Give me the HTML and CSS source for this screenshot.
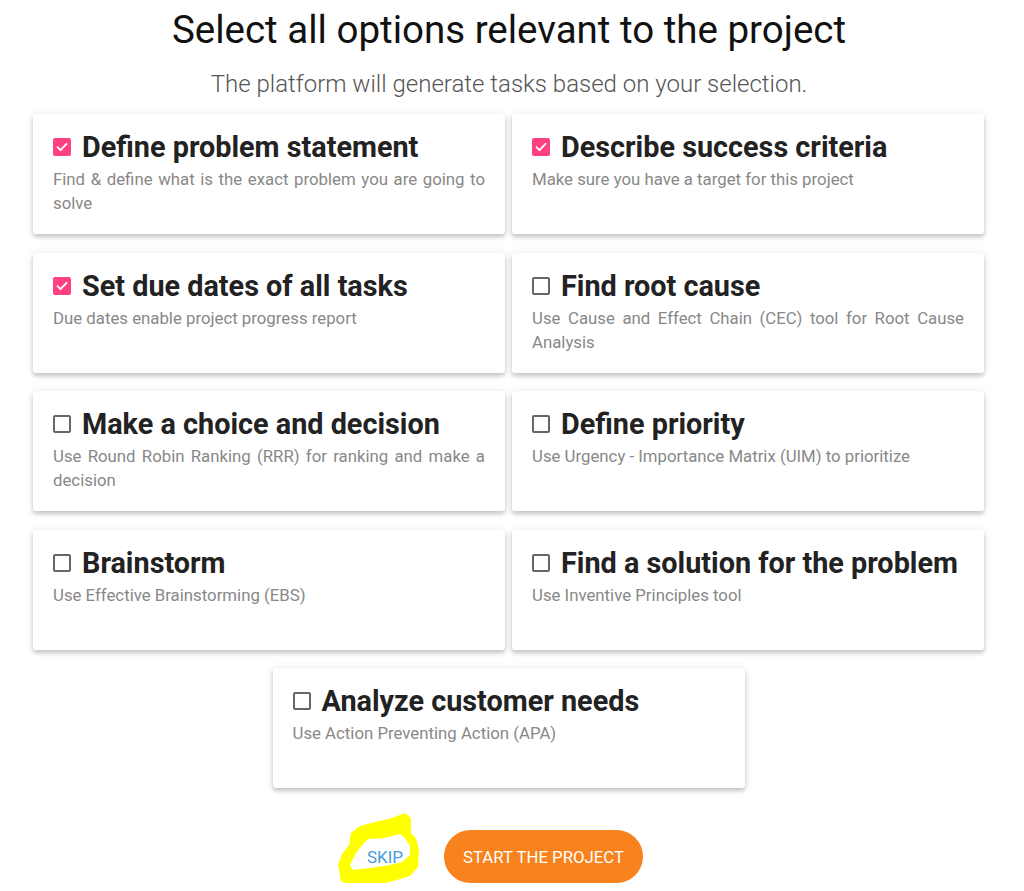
FILE: index.html
```html
<!DOCTYPE html>
<html lang="en">
<head>
<meta charset="utf-8">
<title>Select options</title>
<link rel="stylesheet" href="styles.css">
</head>
<body>
<main class="page">
  <h1 class="title">Select all options relevant to the project</h1>
  <p class="subtitle">The platform will generate tasks based on your selection.</p>
  <section class="grid">
    <div class="card">
      <div class="card-head"><span class="box checked"><svg viewBox="0 0 18 18"><path d="M4.5 9.2l3 3 6-6.4" fill="none" stroke="#fff" stroke-width="1.8" stroke-linecap="round" stroke-linejoin="round"/></svg></span><span class="card-title">Define problem statement</span></div>
      <p class="desc">Find &amp; define what is the exact problem you are going to solve</p>
    </div>
    <div class="card">
      <div class="card-head"><span class="box checked"><svg viewBox="0 0 18 18"><path d="M4.5 9.2l3 3 6-6.4" fill="none" stroke="#fff" stroke-width="1.8" stroke-linecap="round" stroke-linejoin="round"/></svg></span><span class="card-title">Describe success criteria</span></div>
      <p class="desc">Make sure you have a target for this project</p>
    </div>
    <div class="card">
      <div class="card-head"><span class="box checked"><svg viewBox="0 0 18 18"><path d="M4.5 9.2l3 3 6-6.4" fill="none" stroke="#fff" stroke-width="1.8" stroke-linecap="round" stroke-linejoin="round"/></svg></span><span class="card-title">Set due dates of all tasks</span></div>
      <p class="desc">Due dates enable project progress report</p>
    </div>
    <div class="card">
      <div class="card-head"><span class="box"></span><span class="card-title">Find root cause</span></div>
      <p class="desc">Use Cause and Effect Chain (CEC) tool for Root Cause Analysis</p>
    </div>
    <div class="card">
      <div class="card-head"><span class="box"></span><span class="card-title">Make a choice and decision</span></div>
      <p class="desc">Use Round Robin Ranking (RRR) for ranking and make a decision</p>
    </div>
    <div class="card">
      <div class="card-head"><span class="box"></span><span class="card-title">Define priority</span></div>
      <p class="desc">Use Urgency - Importance Matrix (UIM) to prioritize</p>
    </div>
    <div class="card">
      <div class="card-head"><span class="box"></span><span class="card-title">Brainstorm</span></div>
      <p class="desc">Use Effective Brainstorming (EBS)</p>
    </div>
    <div class="card">
      <div class="card-head"><span class="box"></span><span class="card-title">Find a solution for the problem</span></div>
      <p class="desc">Use Inventive Principles tool</p>
    </div>
    <div class="card card-center">
      <div class="card-head"><span class="box"></span><span class="card-title">Analyze customer needs</span></div>
      <p class="desc">Use Action Preventing Action (APA)</p>
    </div>
  </section>
  <div class="actions">
    <div class="skip-wrap">
      <svg class="scribble" viewBox="0 0 100 86"><path fill-rule="evenodd" fill="#ffff00" d="M75 8 L81 13 L81 28 L86 33 L89 45 L88 62 L80 71 L60 77 L40 81 L22 83 L11 76 L8 60 L12 49 L19 40 L21 28 L30 21 L45 17 L62 13 Z M38 34 L55 33 L70 29 L75 33 L80 41 L80 50 L72 57 L60 60 L40 63 L23 65 L20 60 L26 48 L33 39 Z"/></svg>
      <button class="skip">SKIP</button>
    </div>
    <button class="start">START THE PROJECT</button>
  </div>
</main>
</body>
</html>
```
FILE: styles.css
```css
html, body {
  margin: 0;
  padding: 0;
  background: #ffffff;
}
body {
  font-family: Roboto, "Liberation Sans", Arial, sans-serif;
  color: #222;
}
.page {
  width: 952px;
  margin-left: 33px;
}
.title {
  margin: 8px 0 0;
  font-size: 38.5px;
  line-height: 44px;
  font-weight: 400;
  color: #111;
  text-align: center;
}
.subtitle {
  margin: 18px 0 0;
  font-size: 24px;
  line-height: 28px;
  font-weight: 300;
  color: #555;
  text-align: center;
}
.grid {
  margin-top: 16px;
  display: grid;
  grid-template-columns: 472px 472px;
  column-gap: 7px;
  row-gap: 18.5px;
}
.card {
  height: 120px;
  box-sizing: border-box;
  padding: 16px 20px 0 20px;
  background: #fff;
  border-radius: 3px;
  box-shadow: 0 3px 4px rgba(0,0,0,0.18), 0 1px 8px rgba(0,0,0,0.10);
}
.card-center {
  grid-column: 1 / -1;
  justify-self: center;
  width: 472px;
}
.card-head {
  display: flex;
  align-items: center;
  height: 34px;
}
.box {
  width: 18px;
  height: 18px;
  box-sizing: border-box;
  border: 2px solid #666;
  border-radius: 2px;
  margin-right: 11px;
  flex: none;
  display: flex;
}
.box.checked {
  background: #ff4081;
  border: none;
}
.box svg {
  width: 18px;
  height: 18px;
}
.card-title {
  font-size: 28.8px;
  font-weight: 700;
  color: #222;
  line-height: 34px;
}
.desc {
  margin: 3px 0 0;
  font-size: 16.8px;
  line-height: 24px;
  color: #888;
  text-align: justify;
}
.actions {
  margin-top: 42px;
  display: flex;
  justify-content: center;
  align-items: center;
  padding-right: 34px;
  gap: 15px;
}
.skip-wrap {
  position: relative;
  width: 88px;
  height: 53px;
}
.scribble {
  position: absolute;
  left: -11px;
  top: -25px;
  width: 100px;
  height: 86px;
}
.skip {
  position: relative;
  width: 88px;
  height: 53px;
  border: none;
  background: transparent;
  font-family: Roboto, "Liberation Sans", Arial, sans-serif;
  font-size: 17px;
  color: #4a9bd6;
  padding: 0;
}
.start {
  width: 199px;
  height: 53px;
  border: none;
  border-radius: 27px;
  background: #f7821e;
  color: #fff;
  font-family: Roboto, "Liberation Sans", Arial, sans-serif;
  font-size: 16.8px;
  font-weight: 400;
  padding: 0;
}
```
